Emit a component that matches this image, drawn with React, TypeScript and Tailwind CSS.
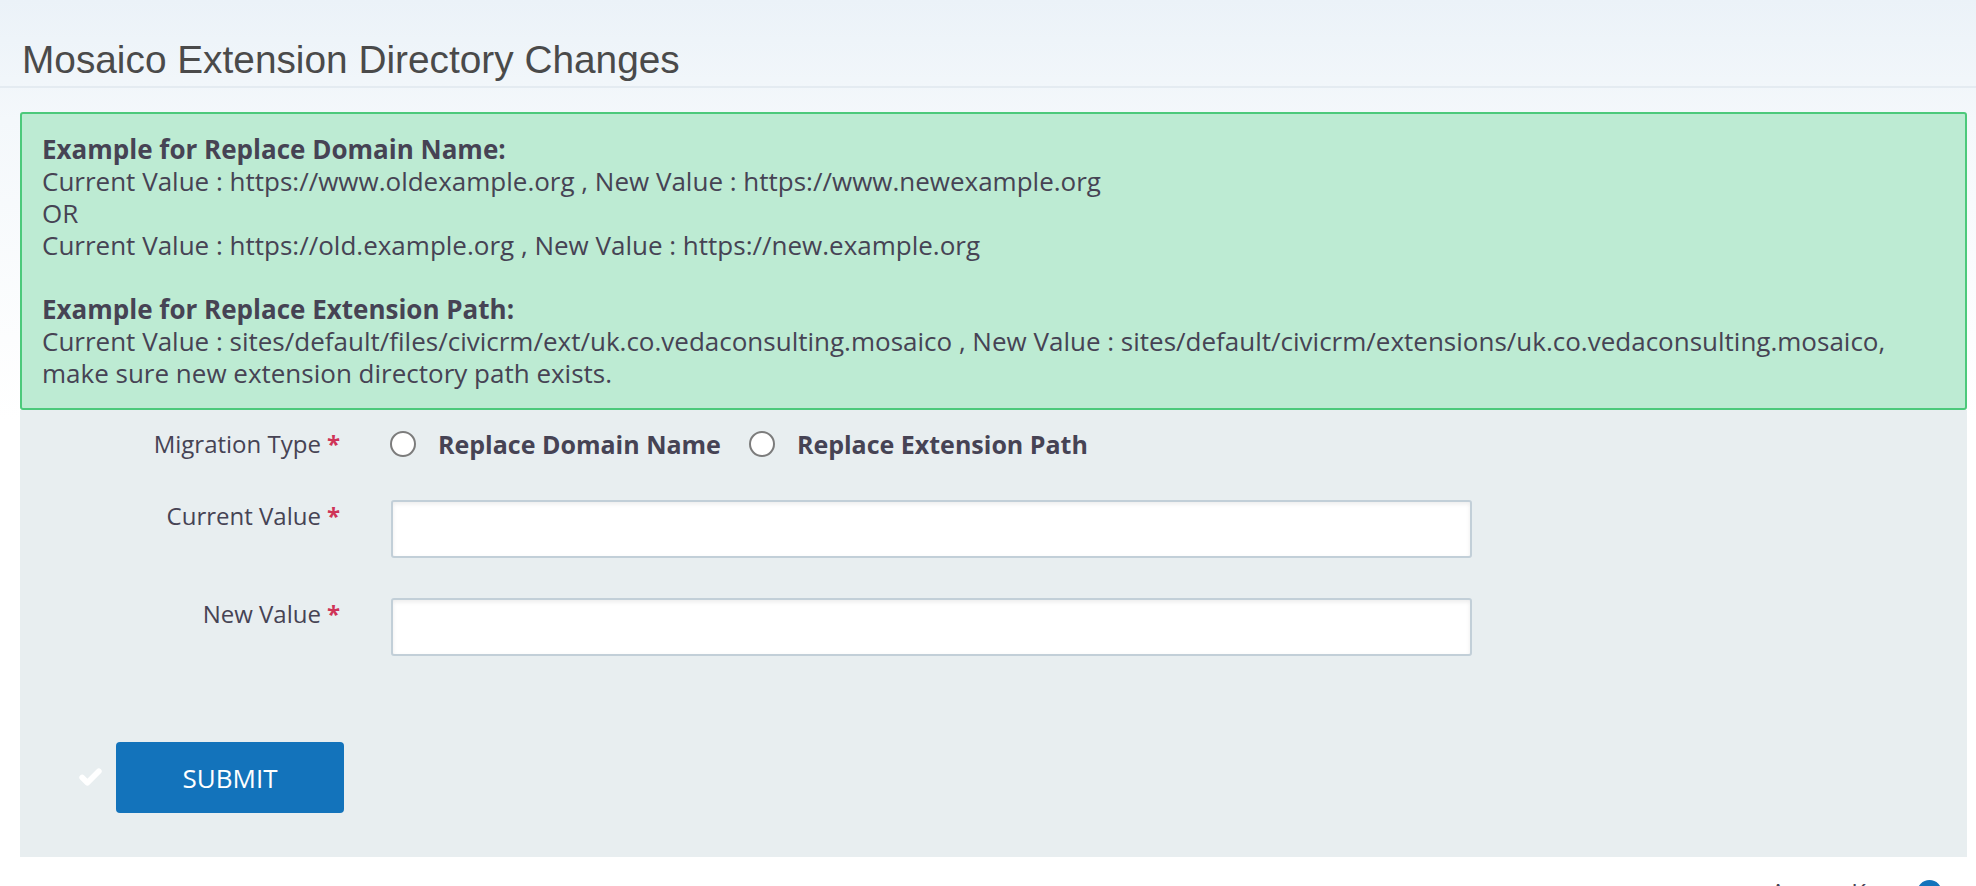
import { Check } from "lucide-react";

const Required = () => <span className="ml-[6px] font-bold text-[#cf3458]">*</span>;

const Radio = ({ label }: { label: string }) => (
  <label className="flex items-center">
    <span className="h-[26px] w-[26px] rounded-full border-2 border-[#7c7c7c] bg-white" />
    <span className="ml-[22px] text-[25px] font-bold text-[#464354]">{label}</span>
  </label>
);

const TextInput = () => (
  <div className="h-[58px] w-[1081px] rounded-[3px] border-2 border-[#c2cfd8] bg-white shadow-[inset_0_2px_4px_rgba(0,0,0,0.08)]" />
);

export default function App() {
  return (
    <div className="min-h-screen w-full bg-[linear-gradient(to_bottom,#ebf2f8_0px,#f4f8fb_120px,#ffffff_420px)] font-['Open_Sans',sans-serif] text-[24px] leading-[32px] text-[#464354]">
      <div className="border-b-2 border-[#e4ebf1] px-[22px] pb-[4px] pt-[38px]">
        <h1 className="font-['Liberation_Sans',Arial,sans-serif] text-[38.8px] leading-[44px] text-[#4a4a4a]">
          Mosaico Extension Directory Changes
        </h1>
      </div>

      <div className="pl-[20px] pr-[9px] pt-[24px]">
        <div className="rounded-[3px] border-2 border-[#4cc97b] bg-[#bdebd3] px-[20px] py-[19px] text-[26px]">
          <div className="font-bold">Example for Replace Domain Name:</div>
          <div>Current Value : https://www.oldexample.org , New Value : https://www.newexample.org</div>
          <div>OR</div>
          <div>Current Value : https://old.example.org , New Value : https://new.example.org</div>
          <div className="h-[32px]" />
          <div className="font-bold">Example for Replace Extension Path:</div>
          <div>
            Current Value : sites/default/files/civicrm/ext/uk.co.vedaconsulting.mosaico , New Value :
            sites/default/civicrm/extensions/uk.co.vedaconsulting.mosaico,
          </div>
          <div>make sure new extension directory path exists.</div>
        </div>

        <div className="bg-[#e8eef0] pb-[44px] pt-[18px]">
          <div className="flex items-center">
            <div className="w-[320px] text-right">
              Migration Type
              <Required />
            </div>
            <div className="ml-[50px] flex items-center gap-[28px]">
              <Radio label="Replace Domain Name" />
              <Radio label="Replace Extension Path" />
            </div>
          </div>

          <div className="mt-[40px] flex items-start">
            <div className="w-[320px] text-right">
              Current Value
              <Required />
            </div>
            <div className="ml-[51px]">
              <TextInput />
            </div>
          </div>

          <div className="mt-[40px] flex items-start">
            <div className="w-[320px] text-right">
              New Value
              <Required />
            </div>
            <div className="ml-[51px]">
              <TextInput />
            </div>
          </div>

          <div className="mt-[86px] flex items-center pl-[58px]">
            <Check className="h-[25px] w-[25px] text-white" strokeWidth={5.5} />
            <button className="ml-[13px] h-[71px] w-[228px] rounded-[4px] bg-[#1373bb] text-[26px] uppercase text-white">
              Submit
            </button>
          </div>
        </div>
      </div>

      <div className="flex items-center justify-end pr-[34px] pt-[19px]">
        <span>Access Keys</span>
        <span className="ml-[14px] flex h-[25px] w-[25px] items-center justify-center rounded-full bg-[#1373bb] text-[17px] font-bold leading-none text-white">
          ?
        </span>
      </div>
    </div>
  );
}
